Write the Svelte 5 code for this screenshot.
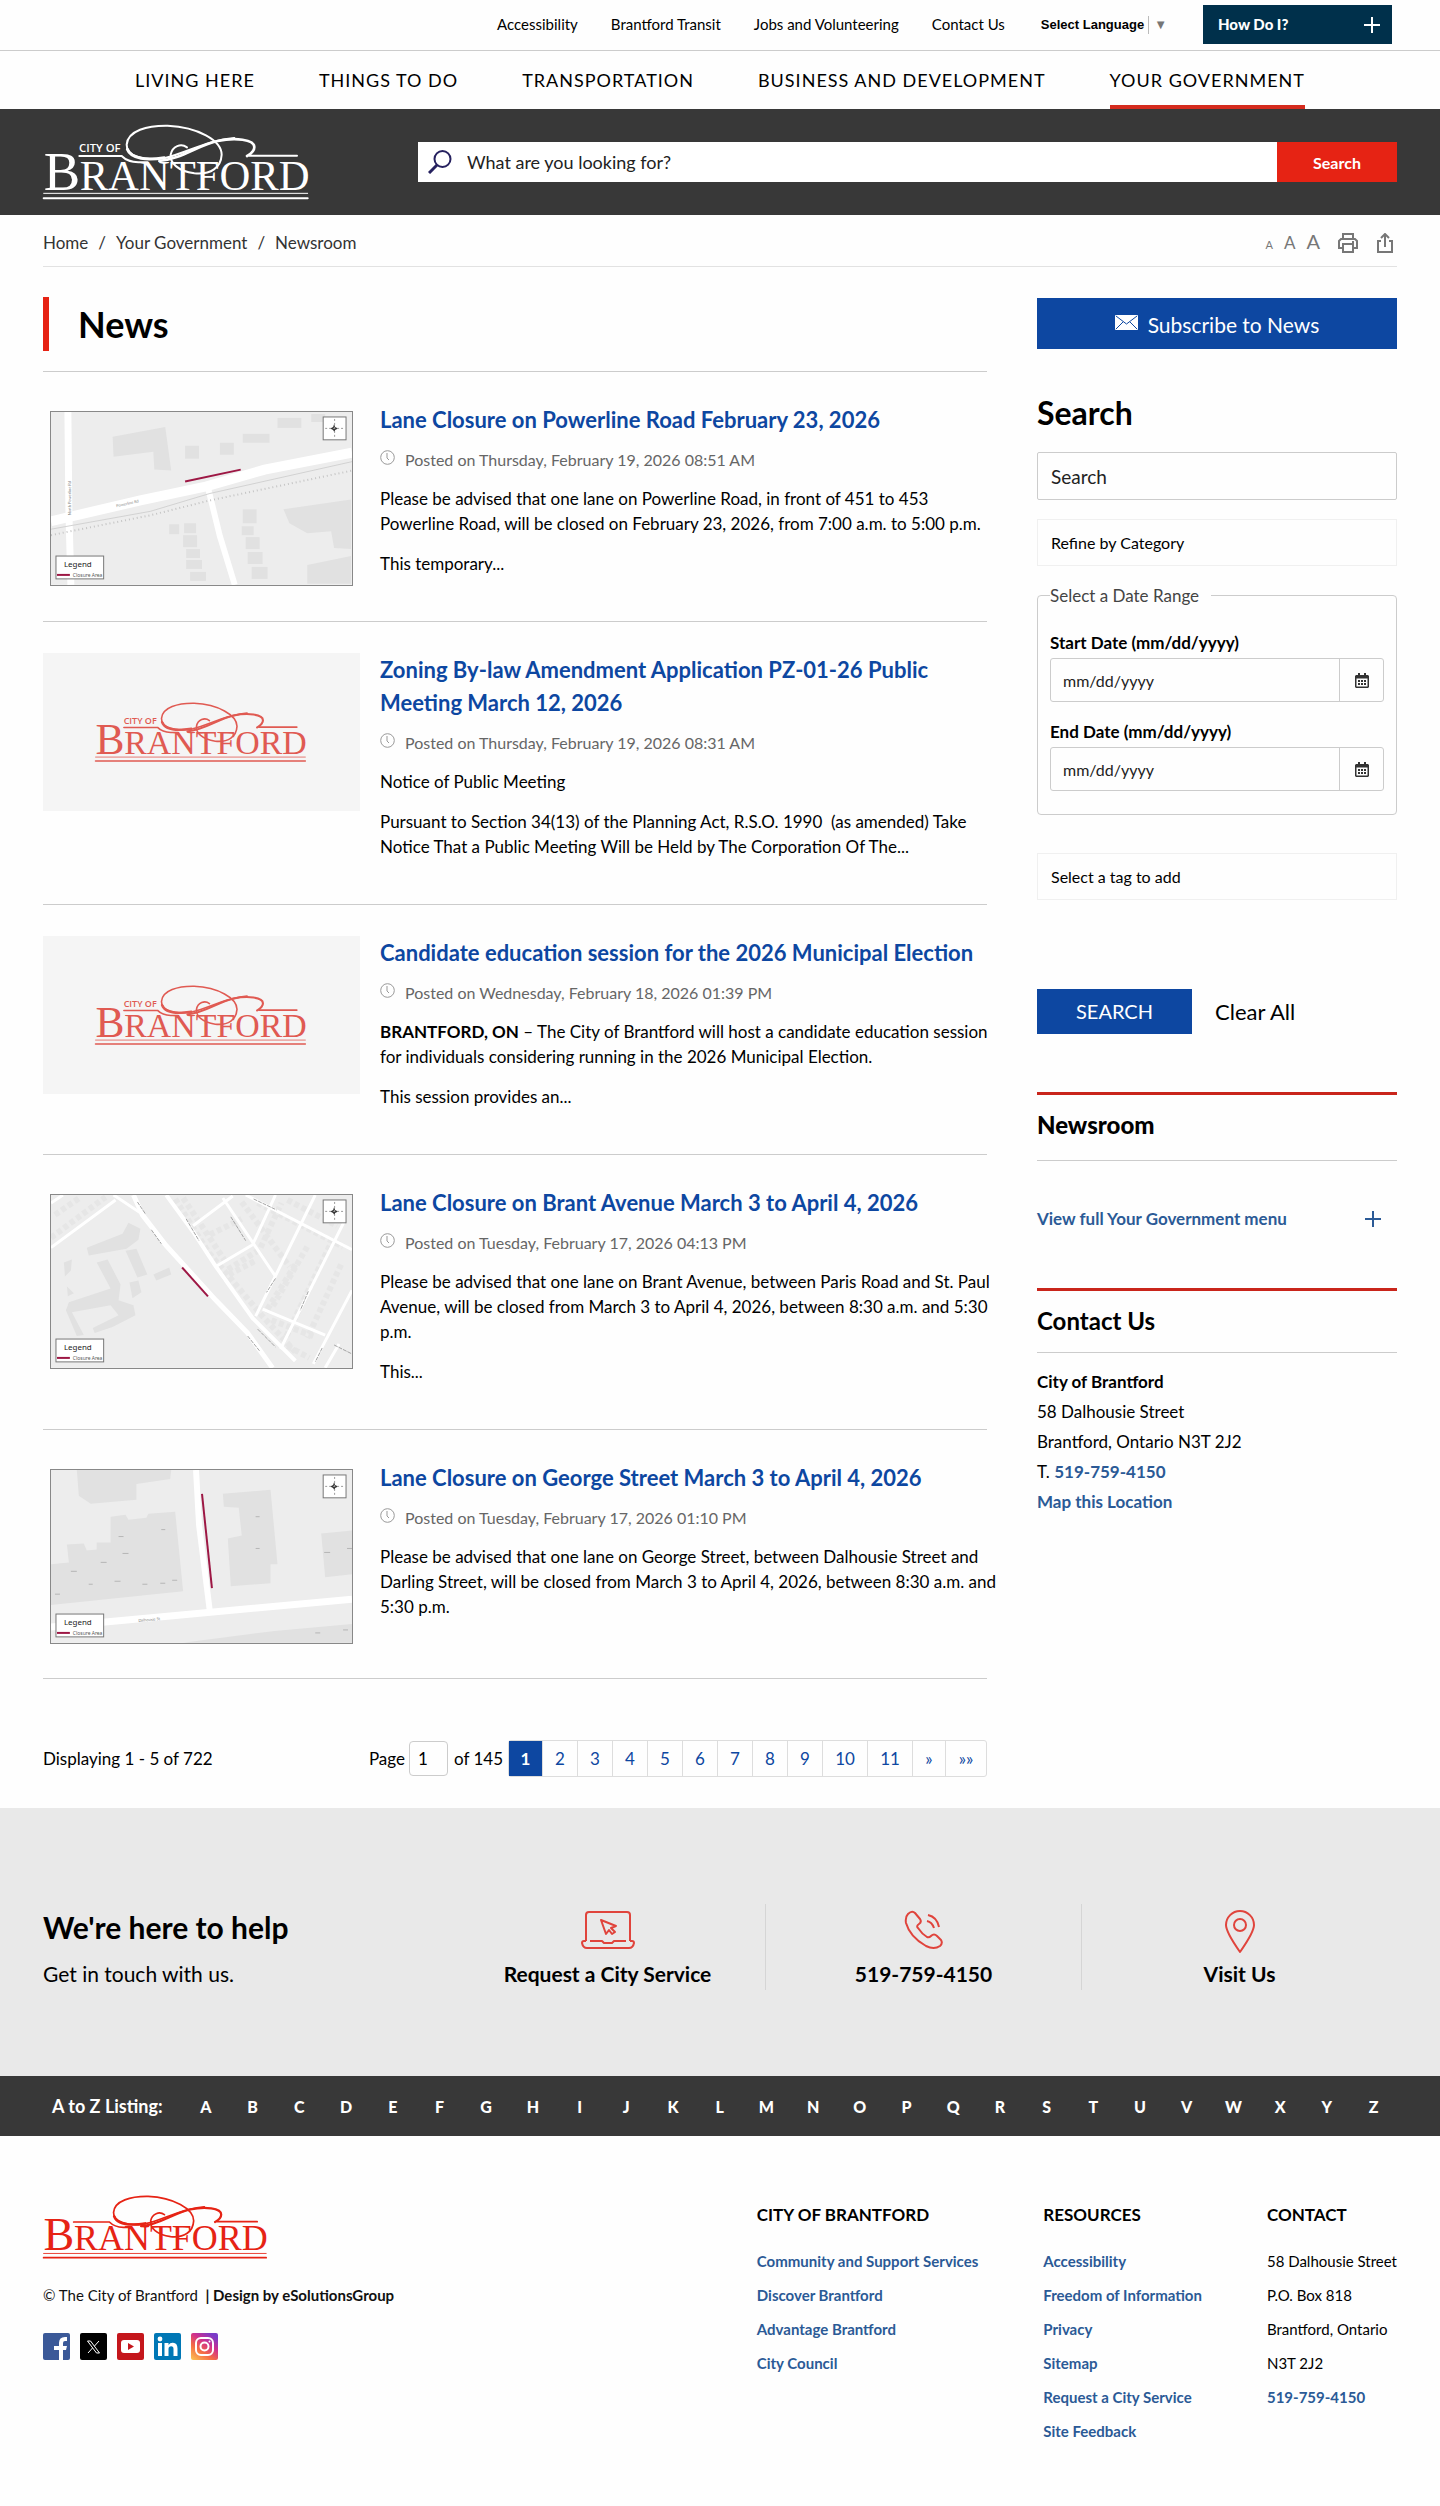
<script lang="ts">
  type Article = {
    title: string;
    posted: string;
    image: 'powerline' | 'brant' | 'george' | 'logo';
    lead?: string;
    body: string[];
  };

  const topLinks = ['Accessibility', 'Brantford Transit', 'Jobs and Volunteering', 'Contact Us'];
  const navLinks = ['Living Here', 'Things To Do', 'Transportation', 'Business and Development', 'Your Government'];

  const articles: Article[] = [
    {
      title: 'Lane Closure on Powerline Road February 23, 2026',
      posted: 'Thursday, February 19, 2026 08:51 AM',
      image: 'powerline',
      body: [
        'Please be advised that one lane on Powerline Road, in front of 451 to 453 Powerline Road, will be closed on February 23, 2026, from 7:00 a.m. to 5:00 p.m.',
        'This temporary...',
      ],
    },
    {
      title: 'Zoning By-law Amendment Application PZ-01-26 Public Meeting March 12, 2026',
      posted: 'Thursday, February 19, 2026 08:31 AM',
      image: 'logo',
      body: [
        'Notice of Public Meeting',
        'Pursuant to Section 34(13) of the Planning Act, R.S.O. 1990\u00a0 (as amended) Take Notice That a Public Meeting Will be Held by The Corporation Of The...',
      ],
    },
    {
      title: 'Candidate education session for the 2026 Municipal Election',
      posted: 'Wednesday, February 18, 2026 01:39 PM',
      image: 'logo',
      lead: 'BRANTFORD, ON',
      body: [
        '– The City of Brantford will host a candidate education session for individuals considering running in the 2026 Municipal Election.',
        'This session provides an...',
      ],
    },
    {
      title: 'Lane Closure on Brant Avenue March 3 to April 4, 2026',
      posted: 'Tuesday, February 17, 2026 04:13 PM',
      image: 'brant',
      body: [
        'Please be advised that one lane on Brant Avenue, between Paris Road and St. Paul Avenue, will be closed from March 3 to April 4, 2026, between 8:30 a.m. and 5:30 p.m.',
        'This...',
      ],
    },
    {
      title: 'Lane Closure on George Street March 3 to April 4, 2026',
      posted: 'Tuesday, February 17, 2026 01:10 PM',
      image: 'george',
      body: [
        'Please be advised that one lane on George Street, between Dalhousie Street and Darling Street, will be closed from March 3 to April 4, 2026, between 8:30 a.m. and 5:30 p.m.',
      ],
    },
  ];

  const pages = ['1', '2', '3', '4', '5', '6', '7', '8', '9', '10', '11', '»', '»»'];
  const letters = 'ABCDEFGHIJKLMNOPQRSTUVWXYZ'.split('');

  const cityLinks = ['Community and Support Services', 'Discover Brantford', 'Advantage Brantford', 'City Council'];
  const resourceLinks = ['Accessibility', 'Freedom of Information', 'Privacy', 'Sitemap', 'Request a City Service', 'Site Feedback'];

  // Small building footprints on the maps: x, y, width, height
  const powerlineHouses = [
    [135, 34, 14, 13], [170, 31, 14, 12], [193, 22, 27, 9], [228, 6, 24, 10], [262, 2, 14, 8],
    [119, 113, 10, 10], [134, 112, 12, 10], [133, 124, 14, 12], [136, 138, 14, 9], [136, 149, 16, 9], [140, 161, 16, 9],
    [193, 98, 14, 14], [192, 115, 12, 9], [196, 126, 14, 12], [198, 141, 15, 12], [202, 156, 16, 12],
  ];
</script>

{#snippet logo(withCity: boolean)}
  <svg class="logo" viewBox="36 36 804 228" role="img" aria-label="City of Brantford">
    <g fill="currentColor" font-family="'Liberation Serif', serif">
      {#if withCity}
        <text x="144" y="120" font-size="34" font-family="'Open Sans', sans-serif" font-weight="600">CITY OF</text>
      {/if}
      <text x="38" y="233" font-size="164">B</text>
      <text x="146" y="233" font-size="128">RANTFORD</text>
    </g>
    <g fill="none" stroke="currentColor" stroke-linecap="round">
      <path stroke-width="6" d="M145 132H272Q290 150 322 151H350M655 131H798" />
      <path stroke-width="6" d="M610 78C530 84 468 122 405 137C335 150 286 130 287 98C290 56 350 40 410 41C500 45 572 85 572 128C570 166 540 189 490 184C440 177 416 152 419 128C424 102 450 93 468 106" />
      <path stroke-width="9" d="M289 112C300 142 350 145 400 137" />
      <path stroke-width="8" d="M385 147C450 142 500 100 560 87C612 76 670 82 670 105C670 120 658 126 648 132" />
      <path stroke-width="3" d="M38 244H830" />
      <path stroke-width="6" d="M38 259H830" />
    </g>
  </svg>
{/snippet}

{#snippet plus()}
  <svg class="plus" viewBox="0 0 16 16" aria-hidden="true"><path d="M8 0V16M0 8H16" /></svg>
{/snippet}

{#snippet calendar()}
  <svg width="14" height="15" viewBox="0 0 14 15" aria-hidden="true">
    <path fill="#333" fill-rule="evenodd" d="M3 0h2v2h4V0h2v2h2l1 1v11l-1 1H1l-1-1V3l1-1h2zM1.500 5.500v8h11v-8z" />
    <path stroke="#333" stroke-width="2" stroke-dasharray="2 1" d="M3 8h8M3 11h8" />
  </svg>
{/snippet}

{#snippet map(kind: string)}
  <svg class="map" viewBox="0 0 303 174" role="img" aria-label="Map of the lane closure">
    <rect width="303" height="174" fill="#ededed" />
    {#if kind === 'powerline'}
      <g fill="#e1e1e1">
        <path d="M62 25L115 15L121 59L104 58L103 40L63 45Z" />
        <path d="M234 98L302 88V138L285 137L282 120L258 122L240 112Z" />
        <path d="M258 154L302 145V173H258Z" />
        {#each powerlineHouses as [x, y, w, h]}
          <rect {x} {y} width={w} height={h} />
        {/each}
      </g>
      <g fill="none" stroke="#fff">
        <path stroke-width="7" d="M17 0L18 100L20 174" />
        <path stroke-width="10" d="M0 110L90 89L156 75L215 58L303 41" />
        <path stroke-width="6" d="M158 76L170 125L185 174" />
      </g>
      <g fill="none" stroke="#d2d2d2">
        <path d="M0 118L100 100L160 82L303 50" />
        <path stroke="#c4c4c4" stroke-width="2" stroke-dasharray="1 3" d="M0 124L100 104L160 89L303 59" />
      </g>
      <text x="66" y="96" font-size="4" fill="#888" transform="rotate(-13 66 96)">Powerline Rd</text>
      <text x="20" y="104" font-size="4" fill="#888" transform="rotate(-90 20 104)">North Powerline Rd</text>
      <path stroke="#9d1744" stroke-width="2" d="M135 70L191 58" />
    {:else if kind === 'brant'}
      <g fill="#e1e1e1">
        <path d="M36 53L72 39L78 28L90 34L88 45L76 54L38 61Z" />
        <path d="M75 56L86 54L97 80L87 83Z" />
        <path d="M46 68L57 65L70 90L68 106L83 111L85 121L62 133L44 139L42 134L68 121L60 111L21 118L33 141L26 142L15 116L18 108L60 94Z" />
        <path d="M103 80L119 73L121 80L106 86ZM79 88L88 86L91 98L82 104ZM16 92L23 99L17 102ZM13 68L21 65L20 76L14 82Z" />
      </g>
      <g fill="none" stroke="#e6e6e6" stroke-width="6" stroke-dasharray="5 3">
        <path d="M125 4L158 57L212 121L246 158" />
        <path d="M133 3L175 66M192 7L240 72M160 40L192 24M208 8L294 52" />
        <path d="M238 5L288 31M284 44L236 144M246 70L216 118M258 52L222 114M292 70L258 144M178 75L210 55L232 8" />
        <path d="M0 43L55 2M172 84L206 66M4 20L30 2M222 126L266 143M238 152L260 164" />
      </g>
      <g fill="none" stroke="#fff" stroke-width="4">
        <path stroke-width="5" d="M83 0L92 20L116 51L166 106L198 139L223 174" />
        <path d="M116 0L143 37L166 72L203 124L246 167" />
        <path stroke-width="3" d="M173 3L226 82M143 31L183 1M166 72L203 50L226 0M196 0L303 55" />
        <path stroke-width="3" d="M266 0L206 122M295 27L231 155M213 115L276 141M303 96L264 170M0 53L65 5M63 0L93 20M0 8L12 0M290 150L276 174" />
      </g>
      <g fill="none" stroke="#a3a3a3" stroke-width="1" stroke-dasharray="4 1">
        <path d="M87 7L95 19M101 35L111 49M136 24L149 46M181 22L196 46M204 4L227 15M226 84L217 98M259 97L251 116M208 135L226 153M198 142L210 157M285 151L303 160M273 154L266 168" />
      </g>
      <path stroke="#9d1744" stroke-width="2" d="M132 73L158 102" />
    {:else}
      <g fill="#e1e1e1">
        <path d="M26 0H121L120 9L86 14V30L40 34L28 26Z" />
        <path d="M60 47L75 45L78 50L96 48L98 44L125 42L133 122L0 136V95L18 93L16 75L33 74L36 81L46 80V73H60Z" />
        <path d="M173 24L221 20L228 95H221V114L181 117L178 69L192 66L189 38L174 37Z" />
        <path d="M272 64L303 61V105L276 108Z" />
        <path d="M133 174L225 162L303 155V174Z" />
      </g>
      <g fill="none" stroke="#fff">
        <path stroke-width="6" d="M146 0L149 55L160 143" />
        <path stroke-width="7" d="M0 158L120 147L303 130" />
      </g>
      <g fill="none" stroke="#b5b5b5" stroke-width="1">
        <path d="M68 67h5M72 84h6M50 93h6M20 102h6M38 115h4M64 112h6M92 115h5M110 114h5M122 111h5M111 60h4M206 47h4M206 79h4M275 83h6M298 79h5M4 125h5M266 164h5M294 161h5" />
      </g>
      <text x="88" y="153" font-size="4" fill="#888" transform="rotate(-5 88 153)">Dalhousie St</text>
      <path stroke="#9d1744" stroke-width="2" d="M152 24L162 119" />
    {/if}
    <g fill="#fff" stroke="#777">
      <rect x="274" y="5" width="23" height="23" />
      <rect x="5" y="145" width="48" height="23" />
    </g>
    <path d="M285 12L286 15L289 16.500L286 18L285.500 21L284 18L281 16.500L284 15Z" fill="#333" />
    <path stroke="#999" stroke-dasharray="2 2" d="M276 16.500H295M285.500 7V27" />
    <text x="13" y="156" font-size="8" fill="#222" font-family="'Noto Sans', sans-serif">Legend</text>
    <text x="22" y="166" font-size="5" fill="#555" font-family="'Noto Sans', sans-serif">Closure Area</text>
    <path stroke="#9d1744" stroke-width="2" d="M6 164H19" />
  </svg>
{/snippet}

<div class="page">
  <div class="top-bar">
    {#each topLinks as link}
      <a href="#top">{link}</a>
    {/each}
    <a class="language" href="#language">Select Language<span class="arrow">▼</span></a>
    <button class="how" type="button">How Do I? {@render plus()}</button>
  </div>

  <nav class="main-nav" aria-label="Main">
    {#each navLinks as link}
      <a href="#nav" class:active={link === 'Your Government'}>{link}</a>
    {/each}
  </nav>

  <header class="masthead">
    <a class="brand" href="#home">{@render logo(true)}</a>
    <form class="site-search">
      <svg class="magnifier" viewBox="0 0 24 24" aria-hidden="true">
        <circle cx="14.500" cy="9" r="8" />
        <path d="M9 15L1 23" />
      </svg>
      <input type="text" aria-label="Search the site" placeholder="What are you looking for?" />
      <button type="button">Search</button>
    </form>
  </header>

  <div class="crumb-bar">
    <nav class="crumbs" aria-label="Breadcrumb">
      <a href="#home">Home</a><span>/</span><a href="#government">Your Government</a><span>/</span><a href="#newsroom">Newsroom</a>
    </nav>
    <div class="tools">
      <button type="button" class="small" aria-label="Decrease text size">A</button>
      <button type="button" class="medium" aria-label="Default text size">A</button>
      <button type="button" class="large" aria-label="Increase text size">A</button>
      <button type="button" aria-label="Print">
        <svg width="20" height="20" viewBox="0 0 20 20">
          <path d="M5 6V1H15V6M5 15H1V8L3 6H17L19 8V15H15M5 11H15V19H5Z" />
          <path d="M14 9H16" />
        </svg>
      </button>
      <button type="button" aria-label="Share">
        <svg width="18" height="20" viewBox="0 0 18 20">
          <path d="M5 8H2V19H16V8H13M9 14V1M5 5L9 1L13 5" />
        </svg>
      </button>
    </div>
  </div>

  <div class="columns">
    <main>
      <div class="page-title"><h1>News</h1></div>

      {#each articles as article}
        <article>
          <div class="thumb">
            {#if article.image === 'logo'}
              <div class="placeholder">{@render logo(true)}</div>
            {:else}
              {@render map(article.image)}
            {/if}
          </div>
          <div class="summary">
            <h2><a href="#article">{article.title}</a></h2>
            <div class="posted">
              <svg width="15" height="15" viewBox="0 0 15 15" aria-hidden="true">
                <circle cx="7.500" cy="7.500" r="6.800" />
                <path d="M7 3V8L9 10" />
              </svg>
              Posted on {article.posted}
            </div>
            {#each article.body as text, i}
              <p>{#if i === 0 && article.lead}<strong>{article.lead}</strong>{' '}{/if}{text}</p>
            {/each}
          </div>
        </article>
      {/each}

      <div class="pager">
        <span class="showing">Displaying 1 - 5 of 722</span>
        <label for="page-number">Page</label>
        <input id="page-number" type="text" value="1" />
        <span>of 145</span>
        <ul>
          {#each pages as page}
            <li><a href="#page" class:current={page === '1'} class:wide={page.length > 1} class:chevron={page.startsWith('»')}>{page}</a></li>
          {/each}
        </ul>
      </div>
    </main>

    <aside>
      <a class="subscribe" href="#subscribe">
        <svg width="23" height="15" viewBox="0 0 23 15" aria-hidden="true">
          <rect width="23" height="15" rx="1" fill="#fff" />
          <path d="M1 1L11.500 9L22 1M1 14L8 7M22 14L15 7" fill="none" stroke="#0d47a1" />
        </svg>
        Subscribe to News
      </a>

      <form class="news-search">
        <h2>Search</h2>
        <input class="keyword" type="text" aria-label="Search news" placeholder="Search" />
        <button class="picker" type="button">Refine by Category</button>
        <fieldset>
          <legend>Select a Date Range</legend>
          <label for="start-date">Start Date (mm/dd/yyyy)</label>
          <div class="date">
            <input id="start-date" type="text" placeholder="mm/dd/yyyy" />
            <button type="button" aria-label="Choose start date">{@render calendar()}</button>
          </div>
          <label for="end-date">End Date (mm/dd/yyyy)</label>
          <div class="date">
            <input id="end-date" type="text" placeholder="mm/dd/yyyy" />
            <button type="button" aria-label="Choose end date">{@render calendar()}</button>
          </div>
        </fieldset>
        <button class="picker" type="button">Select a tag to add</button>
        <div class="actions">
          <button class="submit" type="button">SEARCH</button>
          <button class="clear" type="button">Clear All</button>
        </div>
      </form>

      <section class="menu">
        <h3>Newsroom</h3>
        <a class="view-full" href="#menu">View full Your Government menu {@render plus()}</a>
      </section>

      <section class="contact">
        <h3>Contact Us</h3>
        <address>
          <strong>City of Brantford</strong><br />
          58 Dalhousie Street<br />
          Brantford, Ontario N3T 2J2<br />
          T. <a href="#phone">519-759-4150</a><br />
          <a href="#map">Map this Location</a>
        </address>
      </section>
    </aside>
  </div>

  <section class="help">
    <div class="help-text">
      <h2>We're here to help</h2>
      <p>Get in touch with us.</p>
    </div>
    <a href="#request">
      <svg width="54" height="40" viewBox="0 0 54 40" aria-hidden="true">
        <path d="M5 31V5Q5 2 8 2H46Q49 2 49 5V31M5 31H3Q1 31 1 33Q2 38 6 38H48Q52 38 53 33Q53 31 51 31H49M9 31H21L23 33H31L33 31H45" />
        <path d="M20 10L35 16L30 18L34 22L31 24L28 20L25 24Z" />
      </svg>
      Request a City Service
    </a>
    <a href="#call">
      <svg width="40" height="40" viewBox="0 0 40 40" aria-hidden="true">
        <path d="M4 4Q8 0 11 3L16 9Q18 12 15 14Q12 16 14 18Q18 24 23 27Q25 28 27 26Q30 23 33 26L37 30Q39 33 36 36Q30 40 22 36Q6 27 2 13Q1 7 4 4Z" />
        <path d="M24 5Q33 7 35 17M23 11Q28 12 30 18" />
      </svg>
      519-759-4150
    </a>
    <a href="#visit">
      <svg width="32" height="44" viewBox="0 0 32 44" aria-hidden="true">
        <path d="M16 42Q2 22 2 15A14 14 0 0 1 30 15Q30 22 16 42Z" />
        <circle cx="16" cy="15" r="6" />
      </svg>
      Visit Us
    </a>
  </section>

  <nav class="a-to-z" aria-label="A to Z">
    <span>A to Z Listing:</span>
    <ul>
      {#each letters as letter}
        <li><a href="#letter">{letter}</a></li>
      {/each}
    </ul>
  </nav>

  <footer>
    <div class="about">
      {@render logo(false)}
      <p>© The City of Brantford&nbsp; <strong>| <a href="#design">Design by eSolutionsGroup</a></strong></p>
      <div class="social">
        <a href="#facebook" aria-label="Facebook">
          <svg viewBox="0 0 27 27"><rect width="27" height="27" rx="2" fill="#3b5998" /><path fill="#fff" d="M16 27V17H11V13H16V10Q16 4 22 4H24V8H22Q20 8 20 10V13H24L23 17H20V27Z" /></svg>
        </a>
        <a href="#x" aria-label="X">
          <svg viewBox="0 0 27 27"><rect width="27" height="27" rx="2" fill="#000" /><path fill="none" stroke="#fff" d="M7.500 8H10.500L19.500 20H16.500ZM19 8L14.500 13M12.500 15L8 20" /></svg>
        </a>
        <a href="#youtube" aria-label="YouTube">
          <svg viewBox="0 0 27 27"><rect width="27" height="27" rx="2" fill="#c4161c" /><rect x="4" y="7" width="19" height="13" rx="3" fill="#fff" /><path fill="#c4161c" d="M11 10L17 13.500L11 17Z" /></svg>
        </a>
        <a href="#linkedin" aria-label="LinkedIn">
          <svg viewBox="0 0 27 27"><rect width="27" height="27" rx="2" fill="#0077b5" /><circle cx="6" cy="6" r="2.400" fill="#fff" /><path fill="#fff" d="M4 10H8V23H4ZM10.500 10H14.500V12Q16 9.500 19 9.700Q23.500 10 23.500 15.500V23H19.500V16Q19.500 13.200 17.200 13.200Q14.500 13.200 14.500 16V23H10.500Z" /></svg>
        </a>
        <a href="#instagram" aria-label="Instagram">
          <svg viewBox="0 0 27 27">
            <defs>
              <linearGradient id="insta" x1="0" y1="1" x2="0.700" y2="0">
                <stop offset="0" stop-color="#fcc653" />
                <stop offset="0.400" stop-color="#f56a44" />
                <stop offset="0.700" stop-color="#cf2f8e" />
                <stop offset="1" stop-color="#7a3bc8" />
              </linearGradient>
            </defs>
            <rect width="27" height="27" rx="2" fill="url(#insta)" />
            <g fill="none" stroke="#fff" stroke-width="2"><rect x="5" y="5" width="17" height="17" rx="5" /><circle cx="13.500" cy="13.500" r="4" /></g>
            <circle cx="18.500" cy="8.500" r="1" fill="#fff" />
          </svg>
        </a>
      </div>
    </div>
    <div>
      <h4>City of Brantford</h4>
      <ul>
        {#each cityLinks as link}
          <li><a href="#city">{link}</a></li>
        {/each}
      </ul>
    </div>
    <div>
      <h4>Resources</h4>
      <ul>
        {#each resourceLinks as link}
          <li><a href="#resource">{link}</a></li>
        {/each}
      </ul>
    </div>
    <div>
      <h4>Contact</h4>
      <ul>
        <li>58 Dalhousie Street</li>
        <li>P.O. Box 818</li>
        <li>Brantford, Ontario</li>
        <li>N3T 2J2</li>
        <li><a href="#phone">519-759-4150</a></li>
      </ul>
    </div>
  </footer>
</div>

<style>
  :global(body) {
    margin: 0;
    background: #fefefe;
  }

  .page {
    color: #000;
    font-family: Lato, sans-serif;
    font-size: 17px;
    line-height: 25px;
  }

  .page * {
    box-sizing: border-box;
  }

  h1, h2, h3, h4, p, ul {
    margin: 0;
    padding: 0;
    font-weight: 700;
  }

  p, ul {
    font-weight: 400;
  }

  ul {
    list-style: none;
  }

  a {
    color: inherit;
    text-decoration: none;
  }

  button, input {
    margin: 0;
    padding: 0;
    border: 0;
    border-radius: 0;
    background: none;
    color: inherit;
    font: inherit;
  }

  input::placeholder {
    color: #222;
    opacity: 1;
  }

  svg {
    display: block;
    flex: none;
  }

  .plus {
    width: 16px;
    height: 16px;
    fill: none;
    stroke: currentColor;
    stroke-width: 2;
  }

  /* Top bar */
  .top-bar {
    display: flex;
    align-items: center;
    justify-content: flex-end;
    gap: 33px;
    padding: 5px 48px 6px;
    border-bottom: 1px solid #ccc;
    font-size: 15px;
  }

  .language {
    display: flex;
    margin: 0 3px;
    font-family: "Liberation Sans", sans-serif;
    font-size: 13px;
    font-weight: 700;
    line-height: 18px;
  }

  .arrow {
    margin-left: 4px;
    padding-left: 5px;
    border-left: 1px solid #bbb;
    color: #767676;
    font-weight: 400;
  }

  .how {
    display: flex;
    align-items: center;
    justify-content: space-between;
    width: 189px;
    height: 39px;
    padding: 0 12px 0 15px;
    background: #00304b;
    color: #fff;
    font-weight: 900;
  }

  /* Main menu */
  .main-nav {
    display: flex;
    justify-content: center;
    gap: 64px;
    font-size: 18px;
    letter-spacing: 1px;
    text-transform: uppercase;
  }

  .main-nav a {
    padding: 17px 0 12px;
    border-bottom: 4px solid transparent;
  }

  .main-nav .active {
    border-color: #d52b1e;
  }

  /* Logo and site search */
  .masthead {
    display: flex;
    align-items: center;
    gap: 107px;
    padding: 15px 43px;
    background: #383838;
  }

  .brand {
    width: 268px;
    color: #fff;
  }

  .logo {
    width: 100%;
    overflow: visible;
  }

  .site-search {
    display: flex;
    flex: 1;
    align-items: center;
    background: #fff;
  }

  .magnifier {
    width: 24px;
    height: 24px;
    margin: 0 15px 0 10px;
    fill: none;
    stroke: #26215f;
    stroke-width: 2;
  }

  .magnifier path {
    stroke-width: 3;
  }

  .site-search input {
    flex: 1;
    height: 40px;
    font-size: 18px;
  }

  .site-search button {
    width: 120px;
    height: 40px;
    background: #e62314;
    color: #fff;
    font-size: 16px;
    font-weight: 700;
  }

  /* Breadcrumb row */
  .crumb-bar {
    display: flex;
    align-items: center;
    justify-content: space-between;
    height: 52px;
    margin: 0 43px;
    padding-top: 4px;
    border-bottom: 1px solid #e2e2e2;
    color: #333;
  }

  .crumbs span {
    padding: 0 10px;
  }

  .tools {
    display: flex;
    align-items: baseline;
    gap: 11px;
    padding-right: 3px;
    color: #777;
  }

  .tools svg {
    margin: 0 0 -4px 7px;
    fill: none;
    stroke: currentColor;
    stroke-width: 2;
  }

  .small {
    font-size: 11px;
  }

  .medium {
    font-size: 17px;
  }

  .large {
    font-size: 20px;
  }

  /* Content */
  .columns {
    display: flex;
    gap: 50px;
    padding: 30px 43px 31px;
  }

  main {
    flex: 1;
    min-width: 0;
  }

  .page-title {
    padding-bottom: 20px;
    border-bottom: 1px solid #ccc;
  }

  h1 {
    padding-left: 29px;
    border-left: 6px solid #e62314;
    font-size: 36px;
    line-height: 54px;
  }

  article {
    display: flex;
    gap: 20px;
    min-height: 249px;
    padding: 31px 0 30px;
    border-bottom: 1px solid #ccc;
  }

  .thumb {
    flex: none;
    width: 317px;
  }

  .placeholder {
    display: flex;
    align-items: center;
    justify-content: center;
    height: 158px;
    background: #f5f5f5;
    color: #e05a52;
  }

  .placeholder .logo {
    width: 213px;
  }

  .map {
    width: 303px;
    margin: 8px 7px 0;
    border: 1px solid #888;
  }

  .summary {
    flex: 1;
    margin-right: -12px;
  }

  .summary h2 {
    color: #0d47a1;
    font-size: 22px;
    line-height: 33px;
  }

  .posted {
    display: flex;
    gap: 10px;
    margin: 11px 0 14px;
    color: #666;
    font-size: 16px;
  }

  .posted svg {
    margin-top: 3px;
    fill: none;
    stroke: #999;
  }

  .summary p {
    margin-bottom: 15px;
  }

  /* Pagination */
  .pager {
    display: flex;
    align-items: center;
    padding-top: 61px;
    gap: 4px;
  }

  .showing {
    flex: 1;
  }

  .pager input {
    width: 39px;
    height: 35px;
    margin-right: 2px;
    padding: 0 8px;
    border: 1px solid #ccc;
    border-radius: 4px;
  }

  .pager ul {
    display: flex;
    margin-left: 1px;
    border: 1px solid #ddd;
    border-radius: 3px;
    color: #0d47a1;
  }

  .pager li + li {
    border-left: 1px solid #ddd;
  }

  .pager li a {
    display: block;
    width: 34px;
    padding: 5px 0;
    text-align: center;
  }

  .pager .wide {
    width: 44px;
  }

  .pager .chevron {
    width: 32px;
  }

  .pager .chevron.wide {
    width: 40px;
  }

  .pager .current {
    width: 33px;
    background: #0d47a1;
    color: #fff;
    font-weight: 700;
  }

  /* Sidebar */
  aside {
    width: 360px;
    padding-top: 1px;
  }

  .subscribe {
    display: flex;
    justify-content: center;
    gap: 10px;
    padding: 14px 0 12px;
    background: #0d47a1;
    color: #fff;
    font-size: 21px;
  }

  .subscribe svg {
    margin-top: 3px;
  }

  .news-search h2 {
    margin: 41px 0 16px;
    font-size: 32px;
    line-height: 46px;
  }

  .keyword {
    display: block;
    width: 100%;
    height: 48px;
    padding: 0 13px;
    border: 1px solid #ccc;
    border-radius: 2px;
    font-size: 19px;
  }

  .picker {
    display: block;
    width: 100%;
    height: 47px;
    margin-top: 19px;
    padding: 0 13px;
    border: 1px solid #f0f0f0;
    font-size: 16px;
    text-align: left;
  }

  fieldset {
    min-width: 0;
    margin: 17px 0 38px;
    padding: 22px 12px 23px;
    border: 1px solid #ccc;
    border-radius: 4px;
  }

  legend {
    padding: 0 12px 0 0;
    color: #444;
  }

  fieldset label {
    display: block;
    margin-bottom: 3px;
    font-weight: 700;
  }

  .date {
    display: flex;
    height: 44px;
    border: 1px solid #ccc;
    border-radius: 3px;
  }

  .date + label {
    margin-top: 17px;
  }

  .date input {
    flex: 1;
    min-width: 0;
    padding: 0 12px;
    font-size: 16px;
  }

  .date button {
    display: flex;
    align-items: center;
    justify-content: center;
    width: 44px;
    border-left: 1px solid #ccc;
  }

  .actions {
    display: flex;
    align-items: center;
    gap: 23px;
    margin: 89px 0 58px;
    font-size: 22px;
  }

  .submit {
    width: 155px;
    height: 45px;
    background: #0d47a1;
    color: #fff;
    font-size: 20px;
  }

  h3 {
    padding: 15px 0 20px;
    border-top: 3px solid #c9251b;
    border-bottom: 1px solid #ccc;
    font-size: 24px;
    line-height: 30px;
  }

  .menu h3 {
    font-weight: 900;
  }

  .view-full {
    display: flex;
    align-items: center;
    justify-content: space-between;
    padding: 45px 16px 57px 0;
    color: #2b5a96;
    font-weight: 700;
  }

  .contact h3 {
    padding-bottom: 16px;
  }

  address {
    padding-top: 14px;
    font-style: normal;
    line-height: 30px;
  }

  address a {
    color: #2b5a96;
    font-weight: 700;
  }

  /* Help strip */
  .help {
    display: flex;
    align-items: center;
    padding: 96px 43px 86px;
    background: #e9e9e9;
  }

  .help-text {
    flex: 1;
  }

  .help h2 {
    font-size: 30px;
    line-height: 44px;
  }

  .help p {
    margin: 12px 0 4px;
    font-size: 21px;
  }

  .help > a {
    display: flex;
    flex-direction: column;
    align-items: center;
    justify-content: space-between;
    width: 316px;
    height: 86px;
    padding: 6px 0 2px;
    border-left: 1px solid #d5d5d5;
    font-size: 21px;
    font-weight: 700;
    line-height: 28px;
  }

  .help-text + a {
    border-left-color: transparent;
  }

  .help svg {
    fill: none;
    stroke: #e0443c;
    stroke-width: 2;
    stroke-linejoin: round;
  }

  .a-to-z {
    display: flex;
    align-items: center;
    padding: 18px 43px 17px 52px;
    background: #383838;
    color: #fff;
    font-weight: 700;
  }

  .a-to-z span {
    font-size: 18px;
  }

  .a-to-z ul {
    display: flex;
    flex: 1;
    margin-left: 20px;
    font-size: 16px;
  }

  .a-to-z li {
    flex: 1;
    font-weight: 900;
    text-align: center;
  }

  /* Footer */
  footer {
    display: flex;
    align-items: flex-start;
    gap: 65px;
    padding: 66px 43px 58px;
    font-size: 15px;
    line-height: 34px;
  }

  .about {
    flex: 1;
    color: #e62314;
  }

  .about .logo {
    width: 226px;
    margin-top: -7px;
  }

  .about p {
    margin: 19px 0 21px;
    color: #111;
  }

  .social {
    display: flex;
    gap: 10px;
  }

  .social svg {
    width: 27px;
    height: 27px;
  }

  h4 {
    margin-bottom: 16px;
    font-size: 17px;
    line-height: 26px;
    text-transform: uppercase;
  }

  footer ul a {
    color: #2b5a96;
    font-weight: 700;
  }
</style>
